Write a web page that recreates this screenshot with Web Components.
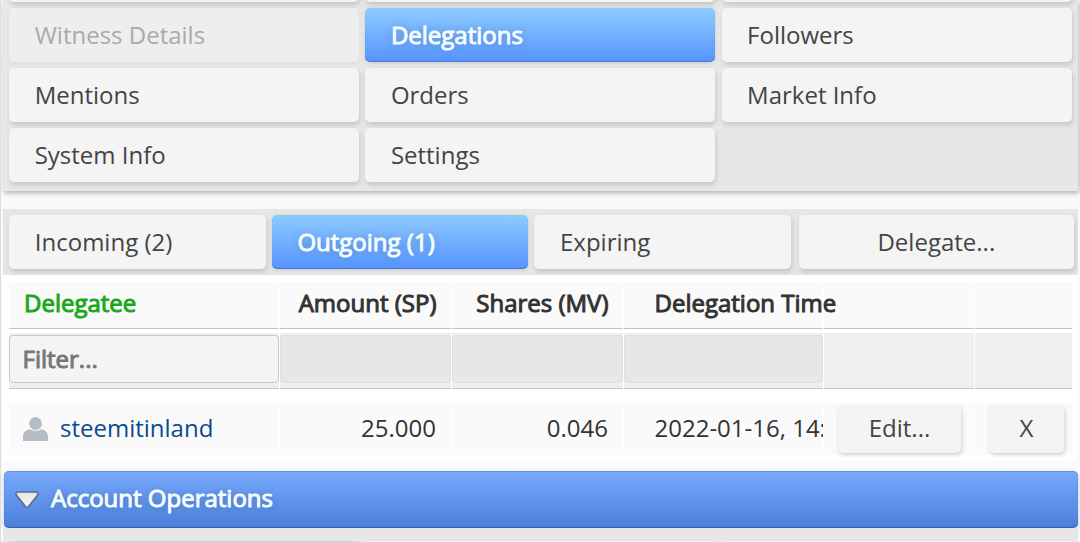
<!DOCTYPE html>
<html lang="en">
<head>
<meta charset="utf-8">
<title>Delegations</title>
<style>
  body {
    margin: 0;
    height: 542px;
    overflow: hidden;
    background: #fafafa;
    color: #333;
    font-family: "Open Sans", "Noto Sans", sans-serif;
    font-size: 24px;
  }
</style>
</head>
<body>
<account-page></account-page>

<script>
class TabButton extends HTMLElement {
  connectedCallback() {
    this.attachShadow({ mode: 'open' });
    this.shadowRoot.innerHTML = `
      <style>
        :host {
          display: flex;
          align-items: center;
          box-sizing: border-box;
          height: 54px;
          padding: 0 25.5px;
          border-radius: 5px;
          background: #f4f4f4;
          box-shadow: 1px 3px 5px rgba(0,0,0,0.14);
          color: #444;
          line-height: 54px;
          white-space: nowrap;
        }
        :host([active]) {
          background: linear-gradient(#8ecbff, #5694ff);
          box-shadow: inset 0 -1px 1px rgba(0,0,60,0.2), 0 1px 4px rgba(0,0,0,0.12);
          color: #f4fcff;
          text-shadow: 0 0 9px rgba(0,0,0,0.25);
          -webkit-text-stroke: 1px #f4fcff;
        }
        :host([disabled]) {
          background: #eee;
          box-shadow: 0 1px 4px rgba(0,0,0,0.05);
          color: #aaa;
        }
        :host([center]) {
          justify-content: center;
        }
        :host([small]) {
          height: 48px;
          line-height: 46px;
          padding: 0 0 2px;
          box-shadow: 1px 2px 4px rgba(0,0,0,0.16);
        }
      </style>
      <slot></slot>
    `;
  }
}

class DelegationTable extends HTMLElement {
  connectedCallback() {
    this.attachShadow({ mode: 'open' });
    this.shadowRoot.innerHTML = `
      <style>
        :host {
          display: block;
          box-sizing: border-box;
          height: 186px;
          padding: 7px 5px 0 6px;
          margin-right: 1px;
          background: #fff;
        }
        .row {
          display: grid;
          grid-template-columns: 270px 171px 171px 199px 150px 97px;
          column-gap: 1px;
        }
        .row > div {
          box-sizing: border-box;
          min-width: 0;
          white-space: nowrap;
        }
        .head > div {
          height: 47px;
          padding: 0 14.5px 0 15px;
          background: #fafafa;
          border-bottom: 1px solid #c4c4c4;
          line-height: 42px;
          -webkit-text-stroke: 1px currentColor;
        }
        /* the long caption runs over into the empty column */
        .head > .time {
          position: relative;
          z-index: 1;
        }
        .filters {
          margin-top: 4px;
        }
        .filters > div {
          height: 56px;
          padding-top: 2px;
          background: #efefef;
          border-bottom: 1px solid #c8c8c8;
        }
        .input {
          box-sizing: border-box;
          height: 48px;
          border: 1px solid #e0e0e0;
          border-radius: 4px;
          background: #e7e7e7;
        }
        .input.on {
          padding-left: 12.5px;
          background: #f4f4f4;
          border-color: #c8c8c8;
          color: #777;
          line-height: 46px;
          -webkit-text-stroke: 1px currentColor;
        }
        .data {
          margin-top: 14px;
        }
        .data > div {
          height: 52px;
          padding: 0 15px;
          background: #fafafa;
          line-height: 49px;
        }
        .row > .num {
          text-align: right;
        }
        .row > .time {
          padding-left: 30.5px;
          padding-right: 0;
        }
        .data > .time {
          overflow: hidden;
        }
        .sorted {
          color: #1aa81a;
        }
        .data > .user {
          display: flex;
          align-items: flex-start;
          gap: 12px;
          padding-left: 14px;
          color: #0b4a8f;
        }
        .user svg {
          margin-top: 14px;
        }
        .data > .action {
          padding: 2px 13px 0 14px;
        }
        .data > .action + .action {
          padding: 2px 8px 0 14px;
        }
      </style>
      <div class="row head">
        <div class="sorted">Delegatee</div>
        <div class="num">Amount (SP)</div>
        <div class="num">Shares (MV)</div>
        <div class="time">Delegation Time</div>
        <div></div>
        <div></div>
      </div>
      <div class="row filters">
        <div><div class="input on">Filter...</div></div>
        <div><div class="input"></div></div>
        <div><div class="input"></div></div>
        <div><div class="input"></div></div>
        <div></div>
        <div></div>
      </div>
      <div class="row data">
        <div class="user">
          <svg width="25" height="24" viewBox="0 0 25 24" fill="#b5bcc2">
            <path d="M0 24V19.5C0 15 3 12.8 7.2 12.2C10 14.3 15 14.3 17.8 12.2C22 12.8 25 15 25 19.5V24Z"/>
            <ellipse cx="12.5" cy="6.5" rx="6.4" ry="6.5"/>
          </svg>
          <span>steemitinland</span>
        </div>
        <div class="num">25.000</div>
        <div class="num">0.046</div>
        <div class="time">2022-01-16, 14:</div>
        <div class="action"><tab-button small center>Edit...</tab-button></div>
        <div class="action"><tab-button small center>X</tab-button></div>
      </div>
    `;
  }
}

class SectionHeader extends HTMLElement {
  connectedCallback() {
    this.attachShadow({ mode: 'open' });
    this.shadowRoot.innerHTML = `
      <style>
        :host {
          display: flex;
          align-items: center;
          gap: 12px;
          box-sizing: border-box;
          height: 57px;
          padding-left: 11.5px;
          border-radius: 5px;
          background: linear-gradient(#78abff, #4a7fd8);
          box-shadow: inset 0 1px 1px rgba(90,120,170,0.5), inset 0 -1px 1px rgba(0,0,60,0.3), 0 2px 5px rgba(60,100,180,0.3);
          color: #f4fcff;
          line-height: 54px;
          text-shadow: 0 0 7px rgba(0,0,0,0.25);
          -webkit-text-stroke: 1px #f4fcff;
        }
        span {
          height: 57px;
        }
      </style>
      <svg width="24" height="18" viewBox="0 0 24 18">
        <defs>
          <linearGradient id="arrow" x2="0" y2="1">
            <stop offset="0" stop-color="#e4e4e4"/>
            <stop offset="1" stop-color="#fafafa"/>
          </linearGradient>
        </defs>
        <path d="M2.5 1H21.5C23 1 23.5 3 22.5 4.2L13.5 15.5C12.6 16.8 11.4 16.8 10.5 15.5L1.5 4.2C.5 3 1 1 2.5 1Z" fill="url(#arrow)" stroke="#5f6a85" stroke-width="1.6"/>
      </svg>
      <span><slot></slot></span>
    `;
  }
}

class AccountPage extends HTMLElement {
  connectedCallback() {
    this.attachShadow({ mode: 'open' });
    this.shadowRoot.innerHTML = `
      <style>
        :host {
          display: block;
          box-sizing: border-box;
          height: 542px;
          padding: 0 2px 0 2px;
          border-left: 1px solid #ddd;
          overflow: hidden;
        }
        .menu {
          display: grid;
          grid-template-columns: repeat(3, 350px);
          grid-template-rows: 2.4px;
          grid-auto-rows: 54px;
          gap: 6px 6.2px;
          box-sizing: border-box;
          height: 191px;
          padding-left: 6.2px;
          background: #e7e7e7;
          box-shadow: 1px 2px 5px rgba(0,0,0,0.3);
        }
        /* the first row is scrolled almost out of view */
        .menu tab-button:nth-child(-n+3) {
          margin-top: -51.6px;
        }
        .tabs {
          display: grid;
          grid-template-columns: repeat(3, 256.6px) 277px;
          column-gap: 6px;
          box-sizing: border-box;
          height: 66px;
          margin-top: 18px;
          padding: 6px 0 0 6.3px;
          background: #e6e6e6;
        }
        .tabs tab-button:last-child {
          margin-left: 1.5px;
        }
        section-header {
          margin: 10px 0 0 0.5px;
        }
        .ops {
          display: grid;
          grid-template-columns: repeat(3, 350px);
          column-gap: 6.2px;
          height: 14px;
          box-sizing: border-box;
          padding: 13px 0 0 6.2px;
          background: #e7e7e7;
          overflow: hidden;
        }
        .ops tab-button {
          border-radius: 2px;
          box-shadow: none;
        }
        .ops tab-button[active] {
          background: #b5d9ee;
        }
      </style>
      <div class="menu">
        <tab-button></tab-button>
        <tab-button></tab-button>
        <tab-button></tab-button>
        <tab-button disabled>Witness Details</tab-button>
        <tab-button active>Delegations</tab-button>
        <tab-button>Followers</tab-button>
        <tab-button>Mentions</tab-button>
        <tab-button>Orders</tab-button>
        <tab-button>Market Info</tab-button>
        <tab-button>System Info</tab-button>
        <tab-button>Settings</tab-button>
      </div>
      <div class="tabs">
        <tab-button>Incoming (2)</tab-button>
        <tab-button active>Outgoing (1)</tab-button>
        <tab-button>Expiring</tab-button>
        <tab-button center>Delegate...</tab-button>
      </div>
      <delegation-table></delegation-table>
      <section-header>Account Operations</section-header>
      <div class="ops">
        <tab-button active></tab-button>
        <tab-button></tab-button>
        <tab-button></tab-button>
      </div>
    `;
  }
}

customElements.define('tab-button', TabButton);
customElements.define('delegation-table', DelegationTable);
customElements.define('section-header', SectionHeader);
customElements.define('account-page', AccountPage);
</script>
</body>
</html>
